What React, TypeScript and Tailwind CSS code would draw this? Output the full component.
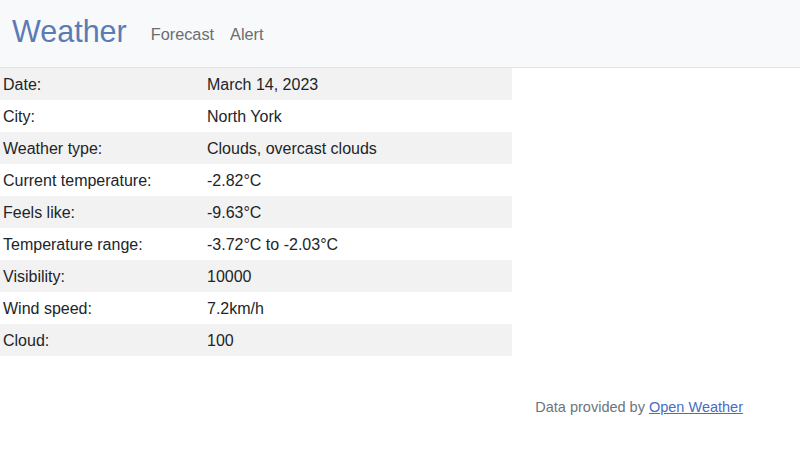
const rows: [string, string][] = [
  ['Date:', 'March 14, 2023'],
  ['City:', 'North York'],
  ['Weather type:', 'Clouds, overcast clouds'],
  ['Current temperature:', '-2.82°C'],
  ['Feels like:', '-9.63°C'],
  ['Temperature range:', '-3.72°C to -2.03°C'],
  ['Visibility:', '10000'],
  ['Wind speed:', '7.2km/h'],
  ['Cloud:', '100'],
];

export default function App() {
  return (
    <div className="min-h-[454px] bg-white text-[#212529] font-['Liberation_Sans',Arial,sans-serif]">
      {/* Navbar */}
      <nav className="flex h-[68px] items-center gap-6 border-b border-[#e3e3e3] bg-[#f8f9fa] px-3 pb-1">
        <span className="text-[30.5px] leading-none text-[#5b7bb5]">Weather</span>
        <div className="flex gap-4 pt-[6px] text-[16.3px] text-[#6b6d70]">
          <span>Forecast</span>
          <span>Alert</span>
        </div>
      </nav>

      {/* Details */}
      <table className="w-[512px] border-collapse text-base">
        <tbody>
          {rows.map(([label, value], i) => (
            <tr key={label} className={i % 2 === 0 ? 'bg-[#f2f2f2]' : 'bg-white'}>
              <td className="h-8 w-[204px] px-[3px] pt-[2px] align-middle">{label}</td>
              <td className="h-8 px-[3px] pt-[2px] align-middle">{value}</td>
            </tr>
          ))}
        </tbody>
      </table>

      {/* Footer */}
      <div className="mt-[41px] flex justify-end pr-[57px] text-[14.5px] text-[#6c757d]">
        <span>
          Data provided by{' '}
          <a href="#" className="text-[#4a6cc3] underline">
            Open Weather
          </a>
        </span>
      </div>
    </div>
  );
}
